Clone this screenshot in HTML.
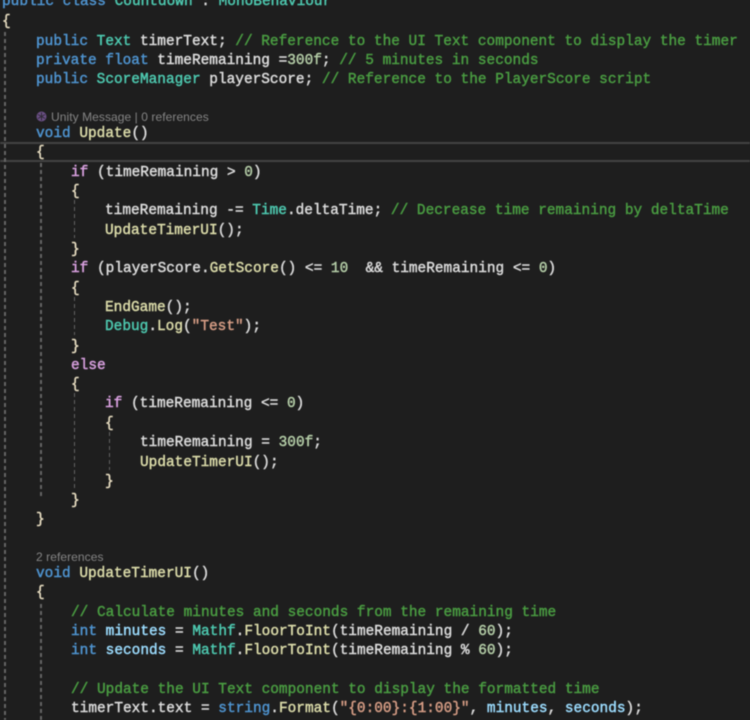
<!DOCTYPE html>
<html><head><meta charset="utf-8">
<style>
html,body{margin:0;padding:0;background:#1e1e1e;}
#r{position:relative;width:750px;height:720px;overflow:hidden;background:#1e1e1e;}
#c{position:absolute;left:0;top:0;width:750px;height:720px;filter:blur(0.4px);}
.l{position:absolute;margin-top:2px;white-space:pre;font-family:"Liberation Mono",monospace;font-size:14.44px;line-height:19px;height:19px;color:#dcdcdc;font-weight:normal;-webkit-text-stroke:0.45px currentColor;}
.k{color:#4f94d0}.t{color:#4ec9b0}.g{color:#4a9c42}.m{color:#dcdcaa}.p{color:#d8a0df}.n{color:#b5cea8}.s{color:#d69d85}.v{color:#9cdcfe}
.y{color:#e6dcc0}
.cl{position:absolute;font-family:"Liberation Sans",sans-serif;font-size:12px;letter-spacing:0.07px;line-height:14px;color:#858585;white-space:pre;}
.gd{position:absolute;width:1.5px;background:repeating-linear-gradient(to bottom,#666 0,#666 4px,transparent 4px,transparent 7px);}
#hl{position:absolute;left:0;top:142px;width:750px;height:16px;border-top:2px solid #434343;border-bottom:2px solid #434343;}
</style></head><body><div id="r"><div id="c">
<div id="hl"></div>
<div class="gd" style="left:4px;top:32px;height:688px"></div>
<div class="gd" style="left:40px;top:163px;height:335px"></div>
<div class="gd" style="left:40px;top:604px;height:116px"></div>
<div class="gd" style="left:73.5px;top:200px;height:38px"></div>
<div class="gd" style="left:73.5px;top:297px;height:38px"></div>
<div class="gd" style="left:73.5px;top:393px;height:97px"></div>
<div class="gd" style="left:108.5px;top:432px;height:38px"></div>

<div class="l" style="left:2px;top:-9px"><span class="k">public class</span> <span class="t">Countdown</span> : <span class="t">MonoBehaviour</span></div>
<div class="l y" style="left:2px;top:11px">{</div>
<div class="l" style="left:36px;top:31px"><span class="k">public</span> <span class="t">Text</span> timerText; <span class="g">// Reference to the UI Text component to display the timer</span></div>
<div class="l" style="left:36px;top:50px"><span class="k">private float</span> timeRemaining =<span class="n">300f</span>; <span class="g">// 5 minutes in seconds</span></div>
<div class="l" style="left:36px;top:69px"><span class="k">public</span> <span class="t">ScoreManager</span> playerScore; <span class="g">// Reference to the PlayerScore script</span></div>

<svg style="position:absolute;left:36px;top:111px" width="11" height="11" viewBox="0 0 11 11"><circle cx="5.5" cy="5.5" r="5" fill="#6b4f85"/><path d="M5.5 1.5V9.5M2 3.5L9 7.5M9 3.5L2 7.5" stroke="#2e2a33" stroke-width="1" fill="none"/></svg>
<div class="cl" style="left:51px;top:110px">Unity Message | 0 references</div>
<div class="l" style="left:36px;top:123px"><span class="k">void</span> <span class="m">Update</span>()</div>
<div class="l y" style="left:36px;top:142px">{</div>
<div class="l" style="left:71px;top:162px"><span class="p">if</span> (timeRemaining &gt; <span class="n">0</span>)</div>
<div class="l y" style="left:71px;top:181px">{</div>
<div class="l" style="left:105px;top:200px">timeRemaining -= <span class="t">Time</span>.deltaTime; <span class="g">// Decrease time remaining by deltaTime</span></div>
<div class="l m" style="left:105px;top:220px">UpdateTimerUI<span style="color:#dcdcdc">();</span></div>
<div class="l y" style="left:71px;top:239px">}</div>
<div class="l" style="left:71px;top:258px"><span class="p">if</span> (playerScore.<span class="m">GetScore</span>() &lt;= <span class="n">10</span>  &amp;&amp; timeRemaining &lt;= <span class="n">0</span>)</div>
<div class="l y" style="left:71px;top:278px">{</div>
<div class="l" style="left:105px;top:297px"><span class="m">EndGame</span>();</div>
<div class="l" style="left:105px;top:316px"><span class="t">Debug</span>.<span class="m">Log</span>(<span class="s">"Test"</span>);</div>
<div class="l y" style="left:71px;top:336px">}</div>
<div class="l p" style="left:71px;top:355px">else</div>
<div class="l y" style="left:71px;top:374px">{</div>
<div class="l" style="left:105px;top:393px"><span class="p">if</span> (timeRemaining &lt;= <span class="n">0</span>)</div>
<div class="l y" style="left:105px;top:413px">{</div>
<div class="l" style="left:140px;top:432px">timeRemaining = <span class="n">300f</span>;</div>
<div class="l" style="left:140px;top:452px"><span class="m">UpdateTimerUI</span>();</div>
<div class="l y" style="left:105px;top:471px">}</div>
<div class="l y" style="left:71px;top:490px">}</div>
<div class="l y" style="left:36px;top:509px">}</div>

<div class="cl" style="left:36px;top:550px">2 references</div>
<div class="l" style="left:36px;top:563px"><span class="k">void</span> <span class="m">UpdateTimerUI</span>()</div>
<div class="l y" style="left:36px;top:582px">{</div>
<div class="l g" style="left:71px;top:602px">// Calculate minutes and seconds from the remaining time</div>
<div class="l" style="left:71px;top:621px"><span class="k">int</span> <span class="v">minutes</span> = <span class="t">Mathf</span>.<span class="m">FloorToInt</span>(timeRemaining / <span class="n">60</span>);</div>
<div class="l" style="left:71px;top:640px"><span class="k">int</span> <span class="v">seconds</span> = <span class="t">Mathf</span>.<span class="m">FloorToInt</span>(timeRemaining % <span class="n">60</span>);</div>
<div class="l g" style="left:71px;top:679px">// Update the UI Text component to display the formatted time</div>
<div class="l" style="left:71px;top:698px">timerText.text = <span class="k">string</span>.<span class="m">Format</span>(<span class="s">"{0:00}:{1:00}"</span>, <span class="v">minutes</span>, <span class="v">seconds</span>);</div>
</div></div></body></html>
